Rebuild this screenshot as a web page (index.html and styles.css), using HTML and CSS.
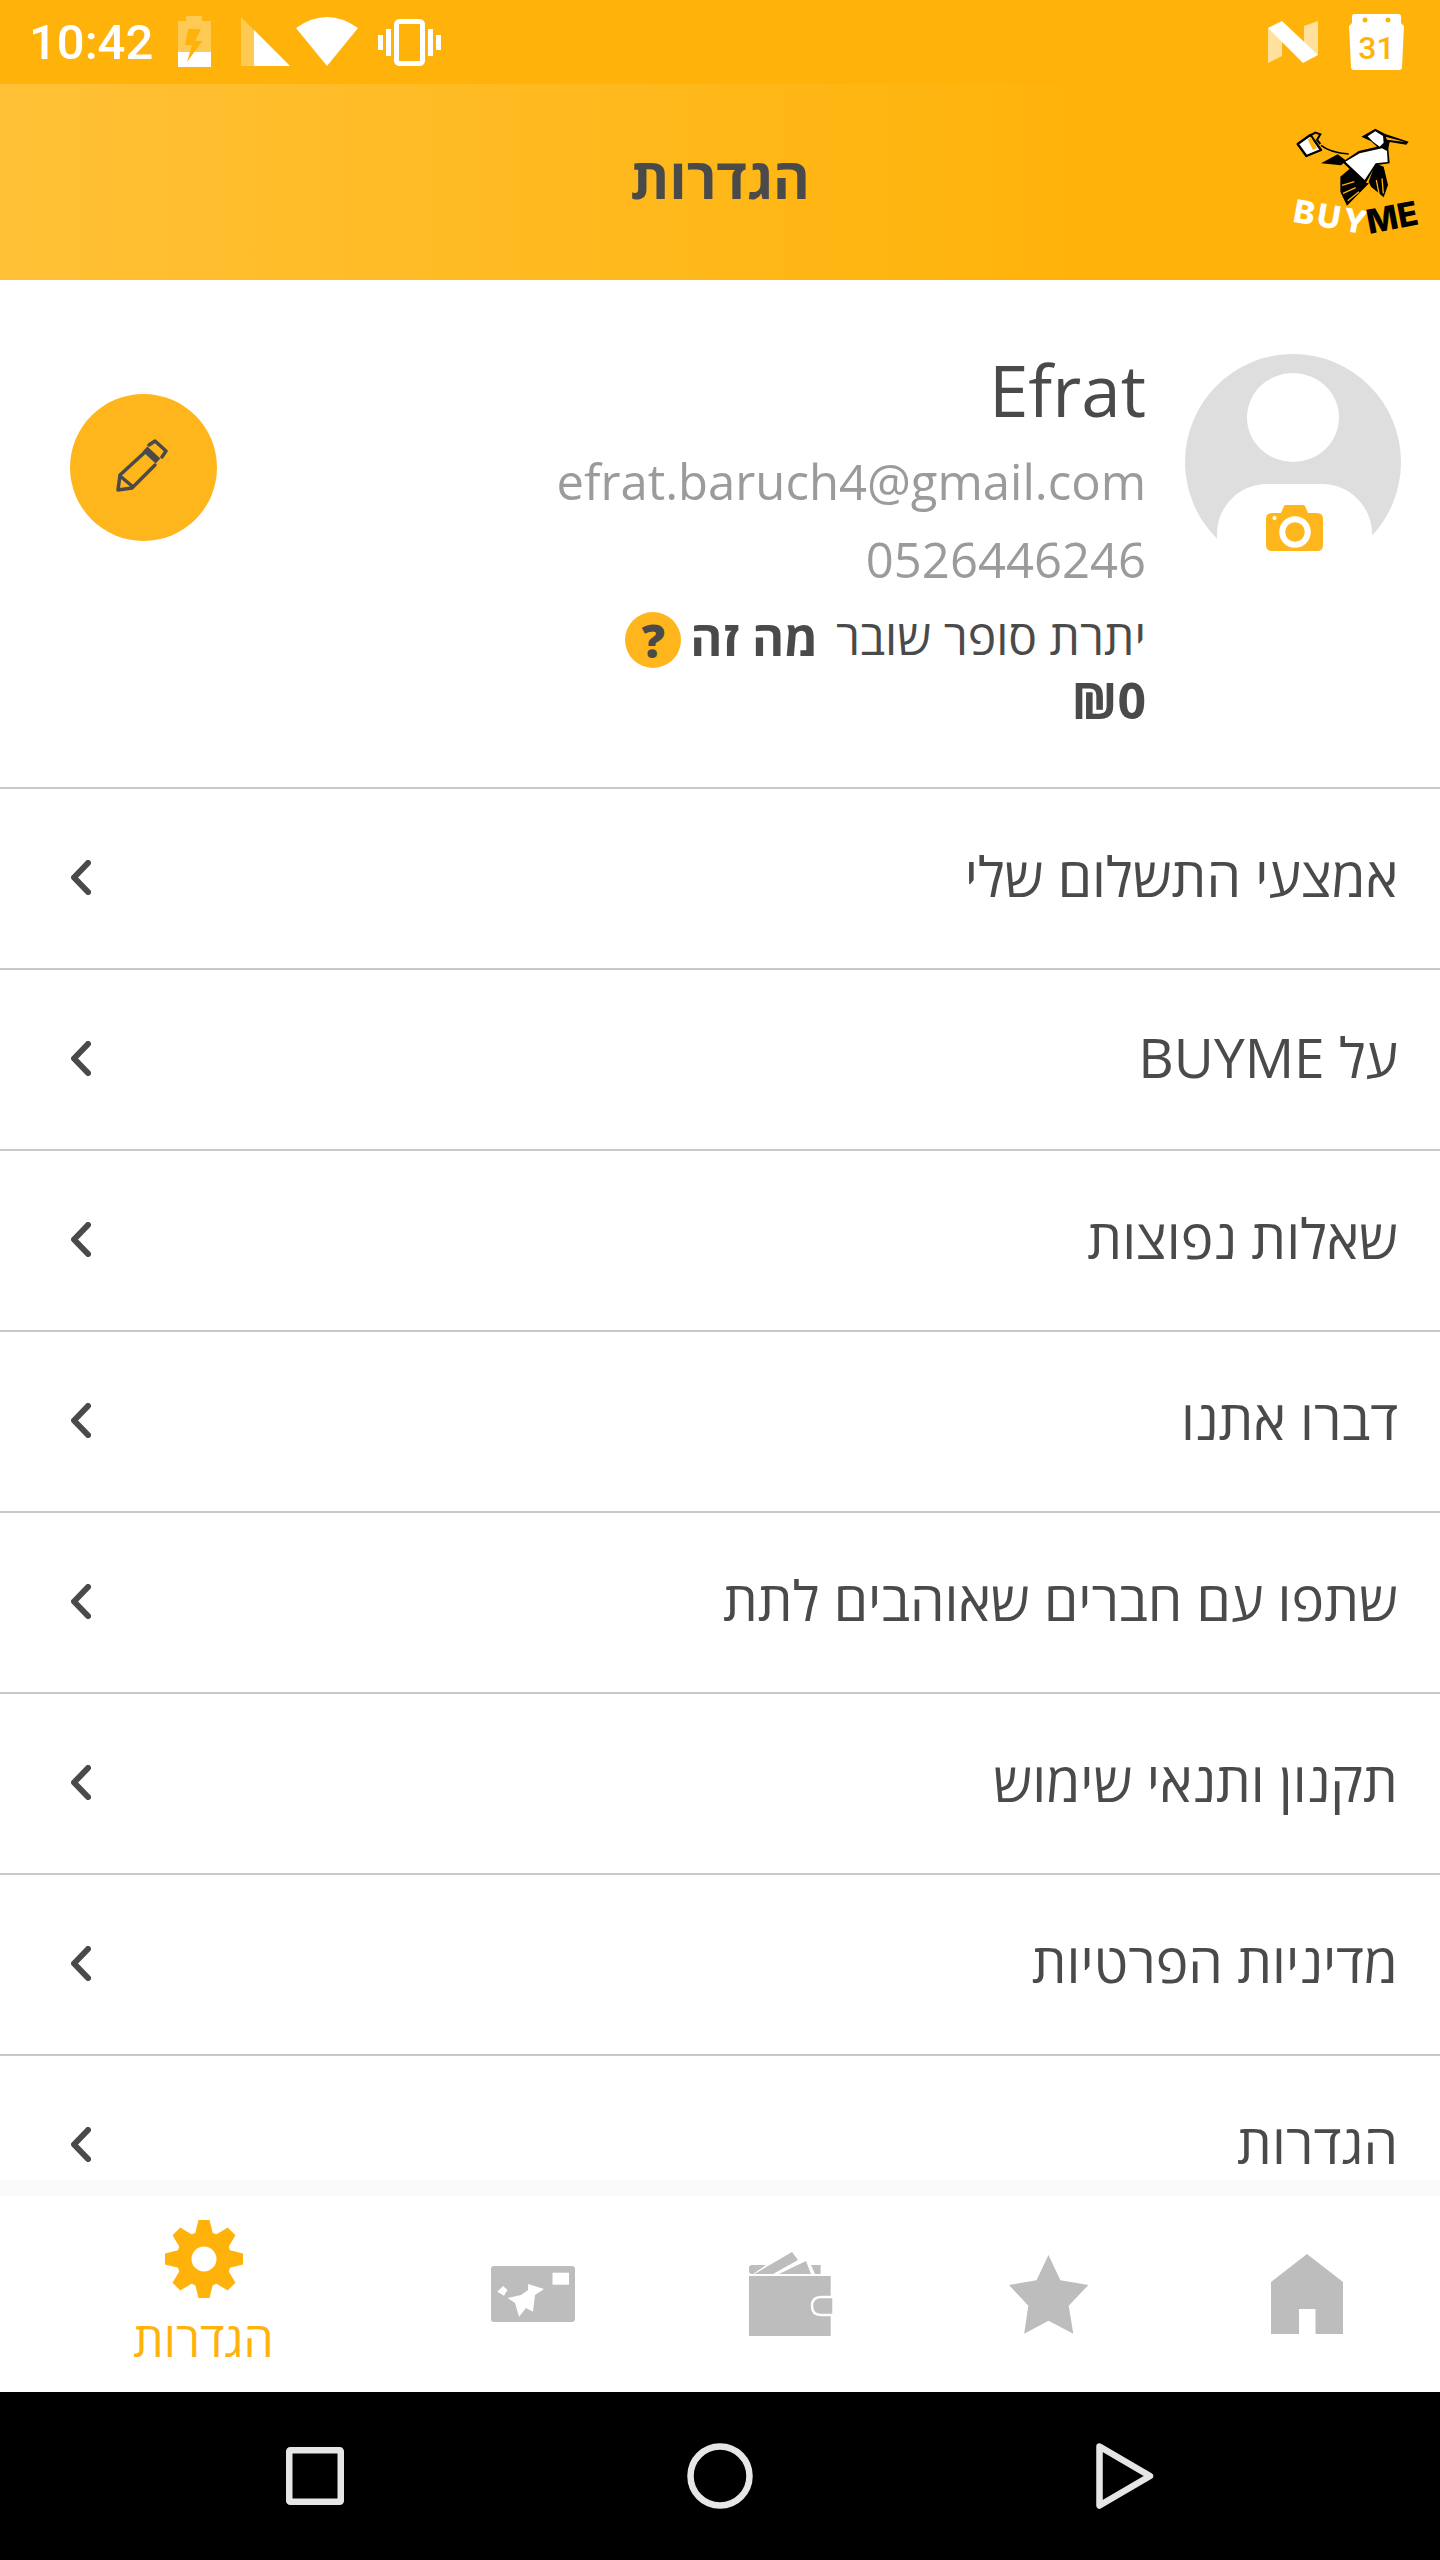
FILE: index.html
```html
<!DOCTYPE html>
<html lang="he" dir="rtl">
<head>
    <meta charset="UTF-8">
    <meta name="viewport" content="width=device-width, initial-scale=1.0">
    <title>BUYME הגדרות</title>
    <link rel="stylesheet" href="styles.css">
</head>
<body>
<div class="screen">

    <!-- status bar -->
    <div class="statusbar" dir="ltr">
        <span class="clock">10:42</span>
        <svg class="ic-battery" width="33" height="51" viewBox="0 0 33 51">
            <path d="M8 0H24V5H33V36H0V5H8Z" fill="#fff" opacity=".3"/>
            <rect y="36" width="33" height="15" fill="#fff"/>
            <path d="M10 13H23L17 25H24.500L9 46L14 29H7Z" fill="#ffb30a"/>
        </svg>
        <svg class="ic-signal" width="49" height="49" viewBox="0 0 49 49">
            <path d="M0 0L49 49H0Z" fill="#fff" opacity=".3"/>
            <path d="M13 13L49 49H13Z" fill="#fff"/>
        </svg>
        <svg class="ic-wifi" width="62" height="49" viewBox="0 0 62 49">
            <path d="M0 11Q31 -11 62 11L31 49Z" fill="#fff"/>
        </svg>
        <svg class="ic-vibrate" width="63" height="47" viewBox="0 0 63 47" fill="#fff">
            <rect x="18.500" y="2.500" width="26" height="42" rx="3" fill="none" stroke="#fff" stroke-width="5"/>
            <rect x="0" y="16" width="5" height="15"/>
            <rect x="8" y="10" width="5" height="27"/>
            <rect x="50" y="10" width="5" height="27"/>
            <rect x="58" y="16" width="5" height="15"/>
        </svg>
        <span class="status-spacer"></span>
        <svg class="ic-n" width="50" height="42" viewBox="0 0 50 42">
            <path d="M0 7L14 14V35L0 42ZM36 5L50 0V34L36 24Z" fill="#fff" opacity=".6"/>
            <path d="M0 7L14 0L50 34L35 42Z" fill="#fff"/>
        </svg>
        <svg class="ic-cal" width="55" height="56" viewBox="0 0 55 56">
            <path d="M5 0H49Q52 0 52 3V9L55 12L53 53Q53 56 50 56H5Q2 56 2 53L0 12L3 9V3Q3 0 5 0Z" fill="#fff"/>
            <circle cx="16" cy="6" r="2.500" fill="#ffb30a"/>
            <circle cx="39" cy="6" r="2.500" fill="#ffb30a"/>
            <text x="27.500" y="45" text-anchor="middle" class="cal-day">31</text>
        </svg>
    </div>

    <!-- header -->
    <header class="header">
        <svg class="logo" width="140" height="117" viewBox="560 375 420 351">
            <!-- gift -->
            <path d="M592 432L630 405L662 450L618 468Z" fill="#fff" stroke="#000" stroke-width="7" stroke-linejoin="round"/>
            <path d="M622 418L633 412L650 444L638 450Z" fill="#ffb30a"/>
            <path d="M632 405L645 398L660 403L650 420L660 432" fill="none" stroke="#000" stroke-width="6"/>
            <path d="M662 436Q690 458 745 462" fill="none" stroke="#000" stroke-width="5"/>
            <!-- tail -->
            <path d="M662 490L712 463L738 482L722 496Z" fill="#000"/>
            <!-- wings -->
            <path d="M720 530L750 505L795 548L806 550L740 617L720 575Z" fill="#000"/>
            <path d="M805 545L825 490L850 500L863 555L850 592L812 560Z" fill="#000"/>
            <path d="M725 556L762 545M728 580L766 563M742 602L776 575M836 582L828 540M849 580L845 535" stroke="#ffb30a" stroke-width="4" fill="none"/>
            <!-- neck, head, beak -->
            <path d="M783 410L825 386L855 402L925 425L918 434L868 426L864 445L868 490L826 496L795 552L726 486L775 453L830 440L812 424Z" fill="#000"/>
            <path d="M802 409L825 394L848 408L850 428L838 440L818 425ZM735 485L778 460L845 445L860 453L862 486L826 490L793 540Z" fill="#fff"/>
            <path d="M856 410L914 426L860 419Z" fill="#ffb30a"/>
            <text class="logo-text logo-buy" transform="translate(575 665) rotate(10)">BUY</text>
            <text class="logo-text logo-me" transform="translate(806 702) rotate(-11)">ME</text>
        </svg>
        <h1 class="header-title">הגדרות</h1>
    </header>

    <!-- profile -->
    <section class="profile">
        <div class="avatar">
            <span class="avatar-head"></span>
            <span class="avatar-body">
                <svg width="57" height="46" viewBox="0 0 57 46">
                    <path d="M6 8H15L18 1Q18.500 0 20 0H37Q38.500 0 39 1L42 8H51Q57 8 57 14V40Q57 46 51 46H6Q0 46 0 40V14Q0 8 6 8Z" fill="#ffb61c"/>
                    <circle cx="29" cy="27" r="12.750" fill="none" stroke="#fff" stroke-width="6"/>
                    <circle cx="8.500" cy="13" r="2" fill="#fff"/>
                </svg>
            </span>
        </div>
        <div class="info">
            <div class="name">Efrat</div>
            <div class="detail">efrat.baruch4@gmail.com</div>
            <div class="detail">0526446246</div>
            <div class="credit">
                <span>יתרת סופר שובר</span>
                <b class="what">מה זה</b>
                <span class="help">?</span>
            </div>
            <div class="balance"><span dir="ltr">₪0</span></div>
        </div>
        <button class="edit-btn">
            <svg width="52" height="53" viewBox="0 0 52 53" fill="none" stroke="#4a4a4a" stroke-width="3.500" stroke-linejoin="round" stroke-linecap="round">
                <path d="M28 14L4 36L2 51L16 49L39 26"/>
                <path d="M4 37L16 47"/>
                <path d="M29 10L42 22" stroke-width="7" stroke-linecap="butt"/>
                <path d="M33 6L39 2L50 12L46 18"/>
            </svg>
        </button>
    </section>

    <!-- menu -->
    <nav class="menu">
        <a class="menu-row"><span>אמצעי התשלום שלי</span><svg class="chevron" width="20" height="35" viewBox="0 0 20 35"><path d="M17 3L3 17.500L17 32"/></svg></a>
        <a class="menu-row"><span>על BUYME</span><svg class="chevron" width="20" height="35" viewBox="0 0 20 35"><path d="M17 3L3 17.500L17 32"/></svg></a>
        <a class="menu-row"><span>שאלות נפוצות</span><svg class="chevron" width="20" height="35" viewBox="0 0 20 35"><path d="M17 3L3 17.500L17 32"/></svg></a>
        <a class="menu-row"><span>דברו אתנו</span><svg class="chevron" width="20" height="35" viewBox="0 0 20 35"><path d="M17 3L3 17.500L17 32"/></svg></a>
        <a class="menu-row"><span>שתפו עם חברים שאוהבים לתת</span><svg class="chevron" width="20" height="35" viewBox="0 0 20 35"><path d="M17 3L3 17.500L17 32"/></svg></a>
        <a class="menu-row"><span>תקנון ותנאי שימוש</span><svg class="chevron" width="20" height="35" viewBox="0 0 20 35"><path d="M17 3L3 17.500L17 32"/></svg></a>
        <a class="menu-row"><span>מדיניות הפרטיות</span><svg class="chevron" width="20" height="35" viewBox="0 0 20 35"><path d="M17 3L3 17.500L17 32"/></svg></a>
        <a class="menu-row"><span>הגדרות</span><svg class="chevron" width="20" height="35" viewBox="0 0 20 35"><path d="M17 3L3 17.500L17 32"/></svg></a>
    </nav>

    <!-- tabs -->
    <div class="tabbar">
        <div class="tab">
            <svg width="72" height="80" viewBox="0 0 72 80" fill="#bdbdbd">
                <path d="M36 0L72 28V80H44.500V55H28V80H0V28Z"/>
            </svg>
        </div>
        <div class="tab">
            <svg width="80" height="79" viewBox="0 0 80 79" fill="#bdbdbd">
                <path d="M39.500 0L51.400 25.300L79.400 30L59.700 50.700L64.300 78.700L39.500 65.700L15.200 78.700L19.300 50.700L0 30L27.500 25.300Z"/>
            </svg>
        </div>
        <div class="tab">
            <svg width="85" height="84" viewBox="0 0 85 84" fill="#bdbdbd">
                <path d="M0 16Q0 13 3 13H17L4 22H3Q0 22 0 19ZM5.500 22L43 0L49 8L24 22ZM30 22L57 9L62 22ZM62 13H71.600V22H66Z"/>
                <path d="M0 24H81.700V84H0Z"/>
                <path d="M72 45H84.500V63H72Q63 63 63 54Q63 45 72 45Z" stroke="#fff" stroke-width="2.500"/>
            </svg>
        </div>
        <div class="tab">
            <svg width="84" height="56" viewBox="0 0 84 56">
                <rect width="84" height="56" rx="3" fill="#bdbdbd"/>
                <rect x="61.500" y="6.700" width="16.500" height="12" fill="#fff"/>
                <path d="M12 20L16.500 24L13 29.700L6.400 25.700ZM37 18L53 23L44 29L42 45.700L35 42L28 50.700L24 37L16.500 32L30 29L37 24Z" fill="#fff"/>
            </svg>
        </div>
        <div class="tab tab-active">
            <svg width="78" height="78" viewBox="0 0 78 78" fill="#ffb30a">
                <path id="tooth" d="M33.500 0H44.500L48 14H30Z"/>
                <use href="#tooth" transform="rotate(45 39 39)"/>
                <use href="#tooth" transform="rotate(90 39 39)"/>
                <use href="#tooth" transform="rotate(135 39 39)"/>
                <use href="#tooth" transform="rotate(180 39 39)"/>
                <use href="#tooth" transform="rotate(225 39 39)"/>
                <use href="#tooth" transform="rotate(270 39 39)"/>
                <use href="#tooth" transform="rotate(315 39 39)"/>
                <circle cx="39" cy="39" r="20" fill="none" stroke="#ffb30a" stroke-width="15"/>
            </svg>
            <span class="tab-label">הגדרות</span>
        </div>
    </div>

    <!-- android nav -->
    <div class="navbar">
        <svg width="58" height="66" viewBox="0 0 58 66" fill="none" stroke="#e6e6e6" stroke-width="6.500" stroke-linejoin="round">
            <path d="M3.500 3.500L54 33L3.500 62.500Z"/>
        </svg>
        <svg width="66" height="66" viewBox="0 0 66 66" fill="none" stroke="#e6e6e6" stroke-width="6.500">
            <circle cx="33" cy="33" r="29.500"/>
        </svg>
        <svg width="58" height="58" viewBox="0 0 58 58" fill="none" stroke="#e6e6e6" stroke-width="6.500" stroke-linejoin="round">
            <rect x="3.250" y="3.250" width="51.500" height="51.500" rx="1"/>
        </svg>
    </div>
</div>
</body>
</html>
```

FILE: styles.css
```css
html, body {
    margin: 0;
    background: #fff;
    font-family: "Open Sans", "Noto Sans", "DejaVu Sans", sans-serif;
    color: #4a4a4a;
}

.screen {
    display: flex;
    flex-direction: column;
    height: 2560px;
    overflow: hidden;
}

/* status bar */
.statusbar {
    display: flex;
    align-items: flex-start;
    flex: none;
    height: 84px;
    padding-left: 29px;
    padding-right: 36px;
    box-sizing: border-box;
    background: #ffb30a;
}

.clock {
    font-family: Roboto, sans-serif;
    font-size: 49px;
    font-weight: 500;
    line-height: 56px;
    margin-top: 15px;
    color: #fff;
    width: 149px;
}

.ic-battery { margin-top: 16px; }
.ic-signal { margin-top: 17px; margin-left: 30px; }
.ic-wifi { margin-top: 17px; margin-left: 6px; }
.ic-vibrate { margin-top: 19px; margin-left: 20px; }
.status-spacer { flex: 1; }
.ic-n { margin-top: 21px; }
.ic-cal { margin-top: 14px; margin-left: 31px; }

.cal-day {
    font-family: Roboto, sans-serif;
    font-size: 32px;
    font-weight: 500;
    fill: #ffb30a;
}

/* header */
.header {
    display: grid;
    grid-template-columns: 1fr auto 1fr;
    align-items: center;
    flex: none;
    height: 196px;
    padding-right: 13px;
    padding-left: 13px;
    box-sizing: border-box;
    background: linear-gradient(to right, #ffc136, #ffb30a 75%);
}

.logo {
    justify-self: start;
    margin-top: 3px;
    direction: ltr;
}

.logo-text {
    font-family: Inter, sans-serif;
    font-weight: 800;
}

.logo-buy {
    font-size: 96px;
    letter-spacing: 8px;
    fill: #fff;
}

.logo-me {
    font-size: 100px;
    fill: #000;
}

.header-title {
    margin: 0 0 10px;
    font-size: 56px;
    font-weight: 700;
}

/* profile */
.profile {
    display: flex;
    align-items: flex-start;
    flex: none;
    height: 507px;
    padding-right: 39px;
    padding-left: 70px;
    box-sizing: border-box;
}

.avatar {
    display: flex;
    flex-direction: column;
    align-items: center;
    flex: none;
    width: 216px;
    height: 216px;
    margin-top: 74px;
    border-radius: 50%;
    background: #dedede;
}

.avatar-head {
    width: 92px;
    height: 94px;
    margin-top: 19px;
    border-radius: 50%;
    background: #fff;
}

.avatar-body {
    display: flex;
    justify-content: center;
    width: 155px;
    height: 90px;
    margin-top: 22px;
    margin-right: -3px;
    padding-top: 21px;
    box-sizing: border-box;
    border-radius: 50px 50px 0 0;
    background: #fff;
}

.info {
    flex: 1;
    margin-right: 39px;
    margin-top: 58px;
}

.name {
    font-size: 71px;
    line-height: 104px;
}

.detail {
    font-size: 49px;
    line-height: 78px;
    color: #9b9b9b;
}

.credit {
    display: flex;
    align-items: center;
    gap: 18px;
    margin-top: 7px;
    font-size: 48px;
    line-height: 62px;
}

.what {
    font-size: 49px;
    font-weight: 700;
}

.help {
    display: flex;
    align-items: center;
    justify-content: center;
    width: 56px;
    height: 56px;
    margin-top: 7px;
    margin-right: -9px;
    border-radius: 50%;
    background: #ffb61c;
    font-size: 46px;
    font-weight: 800;
}

.balance {
    margin-top: 1px;
    font-size: 50px;
    font-weight: 700;
    line-height: 62px;
}

.edit-btn {
    display: flex;
    align-items: center;
    justify-content: center;
    flex: none;
    width: 147px;
    height: 147px;
    margin-top: 114px;
    padding: 0 3px 4px 0;
    border: none;
    border-radius: 50%;
    background: #ffb61c;
}

/* menu */
.menu {
    flex: 1;
    min-height: 0;
    overflow: hidden;
    position: relative;
}

.menu::after {
    content: "";
    position: absolute;
    bottom: 0;
    left: 0;
    right: 0;
    height: 16px;
    background: #fafafa;
}

.menu-row {
    display: flex;
    align-items: center;
    justify-content: space-between;
    height: 181px;
    padding-right: 42px;
    padding-left: 71px;
    box-sizing: border-box;
    border-top: 2px solid #c8c8c8;
    font-size: 55px;
}

.menu-row span {
    margin-top: -6px;
}

.chevron {
    flex: none;
    margin-top: -3px;
    fill: none;
    stroke: #4a4a4a;
    stroke-width: 6;
    stroke-linecap: round;
    stroke-linejoin: round;
}

/* tab bar */
.tabbar {
    display: flex;
    flex: none;
    height: 196px;
    padding-right: 4px;
    box-sizing: border-box;
    background: #fff;
}

.tab {
    display: flex;
    flex-direction: column;
    align-items: center;
    justify-content: center;
    width: 258px;
}

.tab-active {
    flex: 1;
    justify-content: flex-start;
    padding-top: 24px;
    padding-left: 3px;
}

.tab-label {
    margin-top: 11px;
    font-size: 48px;
    line-height: 60px;
    color: #ffb30a;
}

/* android nav */
.navbar {
    display: grid;
    grid-template-columns: repeat(3, 405px);
    justify-content: center;
    justify-items: center;
    align-items: center;
    flex: none;
    height: 168px;
    background: #000;
}
```
